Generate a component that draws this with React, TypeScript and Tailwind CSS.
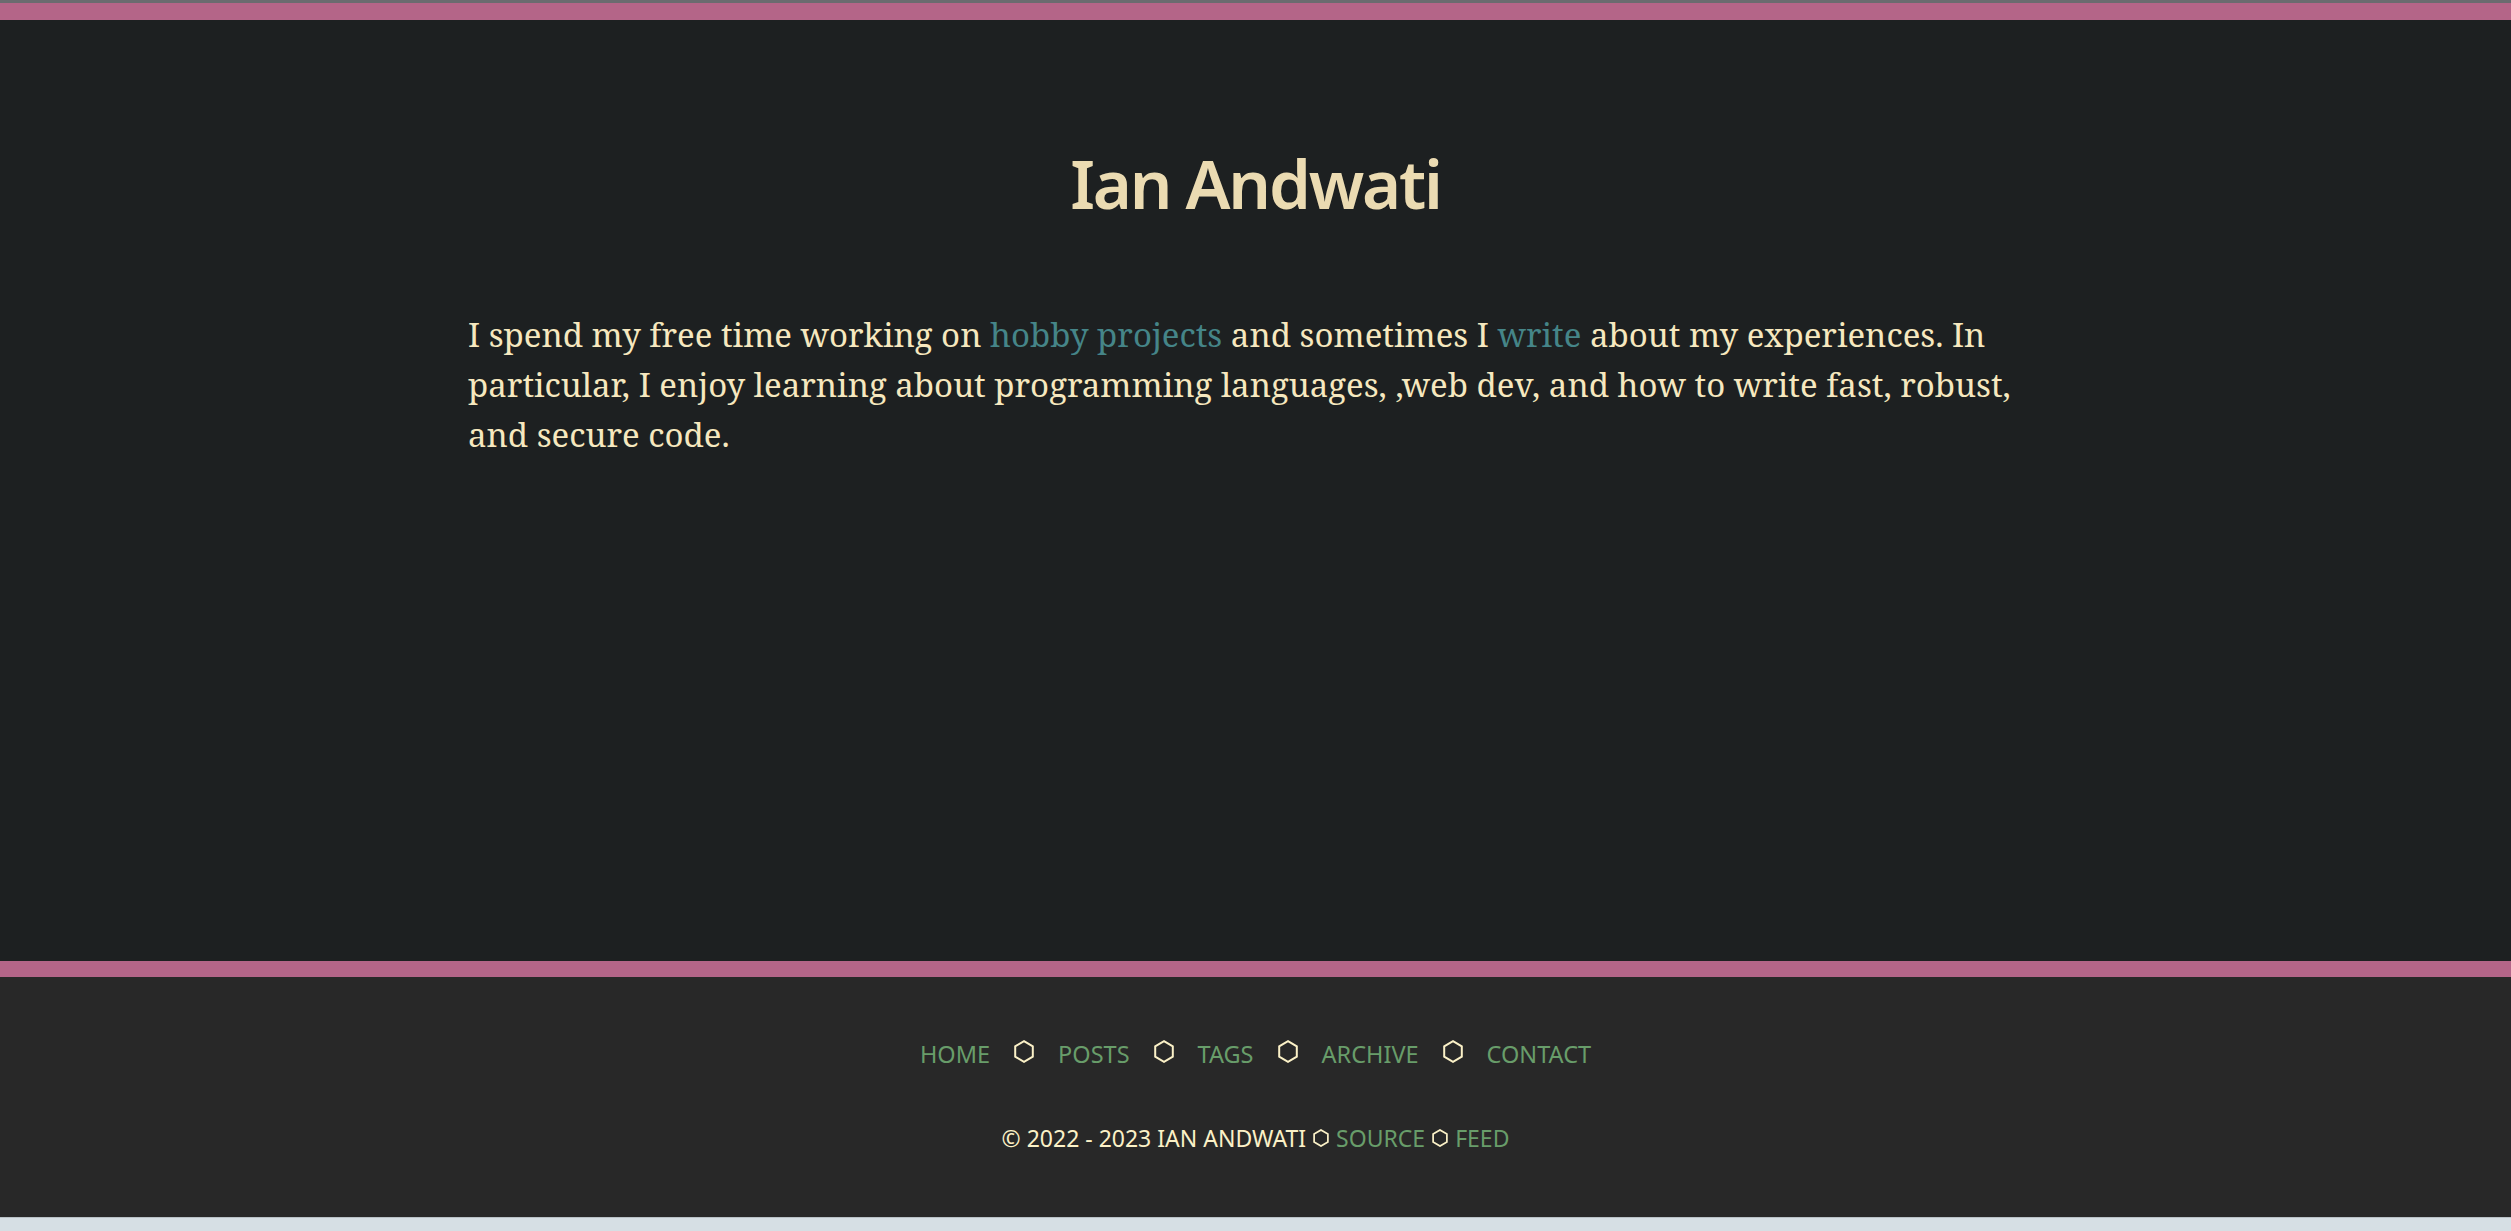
import React from "react";

// Outline hexagon used as a separator between footer links.
function Hex({ w, h, stroke = 2 }: { w: number; h: number; stroke?: number }) {
  return (
    <svg width={w} height={h} viewBox="0 0 20 23" className="shrink-0" aria-hidden="true">
      <polygon
        points="10,1.2 18.8,6.3 18.8,16.7 10,21.8 1.2,16.7 1.2,6.3"
        fill="none"
        stroke="#fbf1c7"
        strokeWidth={stroke}
        strokeLinejoin="miter"
      />
    </svg>
  );
}

const NAV = ["HOME", "POSTS", "TAGS", "ARCHIVE", "CONTACT"];

export default function App() {
  return (
    <div className="min-h-screen w-full bg-[#1d2021]">
      <div className="h-[3px] bg-[#6a6b6f]" />
      <div className="h-[17px] bg-[#b46588]" />

      <main className="h-[941px] bg-[#1d2021] pt-[130px]">
        <h1 className="text-center font-['Noto_Sans',sans-serif] text-[67px] font-semibold leading-none tracking-[-2.2px] text-[#ebdbb2]">
          Ian Andwati
        </h1>
        <div className="mx-auto mt-[93px] max-w-[1575px]">
          <p className="font-['Noto_Serif','DejaVu_Serif',serif] text-[33px] leading-[50px] text-[#f6e8bf]">
            I spend my free time working on{" "}
            <a href="#" className="text-[#458588]">
              hobby projects
            </a>{" "}
            and sometimes I{" "}
            <a href="#" className="text-[#458588]">
              write
            </a>{" "}
            about my experiences. In particular, I enjoy learning about programming languages, ,web dev, and how to
            write fast, robust, and secure code.
          </p>
        </div>
      </main>

      <div className="h-[16px] bg-[#b46588]" />

      <footer className="h-[240px] bg-[#282828] pt-[63px] font-['Noto_Sans',sans-serif] text-[23.5px] leading-none">
        <nav className="flex items-baseline justify-center gap-[24px]">
          {NAV.map((item, i) => (
            <React.Fragment key={item}>
              {i > 0 && <Hex w={20} h={23} />}
              <a href="#" className="text-[#689d6a]">
                {item}
              </a>
            </React.Fragment>
          ))}
        </nav>
        <div className="mt-[60px] flex items-baseline justify-center gap-[7px] text-[23px] text-[#fbf1c7]">
          <span>© 2022 - 2023 IAN ANDWATI</span>
          <Hex w={16} h={18} stroke={2.2} />
          <a href="#" className="text-[#689d6a]">
            SOURCE
          </a>
          <Hex w={16} h={18} stroke={2.2} />
          <a href="#" className="text-[#689d6a]">
            FEED
          </a>
        </div>
      </footer>

      <div className="h-[14px] border-t border-[#b9c1c6] bg-[#d6dfe4]" />
    </div>
  );
}
